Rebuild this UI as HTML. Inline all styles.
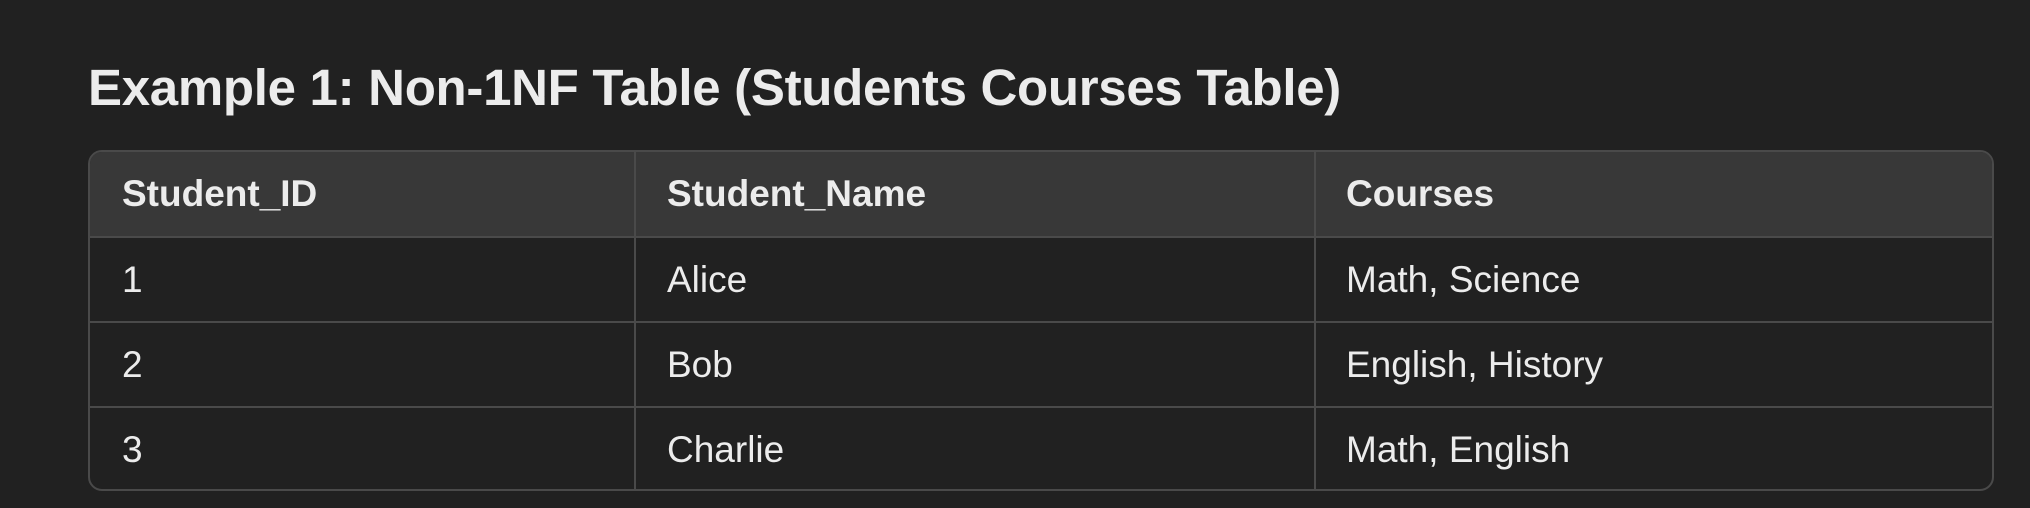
<!DOCTYPE html>
<html><head><style>
html,body{margin:0;padding:0;background:#212121;width:2030px;height:508px;overflow:hidden;font-family:"Liberation Sans",sans-serif;color:#ececec}
h1{position:absolute;left:88px;top:58px;margin:0;font-size:51px;font-weight:bold;line-height:60px;letter-spacing:-0.3px}
.t{position:absolute;left:88px;top:150px;width:1902px;height:337px;border:2px solid #4a4a4a;border-radius:14px;overflow:hidden}
.r{position:absolute;left:0;width:100%;height:85px;border-top:2px solid #4a4a4a;box-sizing:border-box}
.h{background:#383838;border-top:none;top:0;height:84px}
.c{position:absolute;top:0;height:100%;display:flex;align-items:center;font-size:37px}
.h .c{font-weight:bold;font-size:37px}
.v{position:absolute;top:0;bottom:0;width:2px;background:#4a4a4a}
</style></head><body>
<h1>Example 1: Non-1NF Table (Students Courses Table)</h1>
<div class="t">
<div class="r h" ><div class="c" style="left:32px">Student_ID</div><div class="c" style="left:577px">Student_Name</div><div class="c" style="left:1256px">Courses</div></div>
<div class="r" style="top:84px"><div class="c" style="left:32px">1</div><div class="c" style="left:577px">Alice</div><div class="c" style="left:1256px">Math, Science</div></div>
<div class="r" style="top:169px"><div class="c" style="left:32px">2</div><div class="c" style="left:577px">Bob</div><div class="c" style="left:1256px">English, History</div></div>
<div class="r" style="top:254px"><div class="c" style="left:32px">3</div><div class="c" style="left:577px">Charlie</div><div class="c" style="left:1256px">Math, English</div></div>
<div class="v" style="left:544px"></div><div class="v" style="left:1224px"></div>
</div>
</body></html>
